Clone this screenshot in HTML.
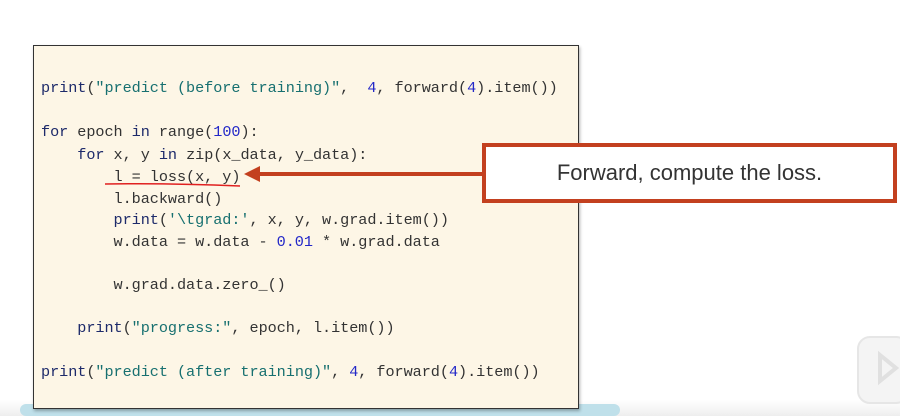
<!DOCTYPE html>
<html><head><style>
body{margin:0;width:900px;height:416px;background:#fff;position:relative;overflow:hidden}
.box{position:absolute;left:33px;top:45px;width:544px;height:362px;background:#fdf6e6;border:1.5px solid #333;box-shadow:1px 2px 3px rgba(0,0,0,.3)}
.l{position:absolute;left:41px;font-family:"Liberation Mono",monospace;font-size:15.2px;line-height:18px;color:#333;white-space:pre;letter-spacing:-0.05px}
.k{color:#1d2a6a}.s{color:#177070}.n{color:#2328c8}
.call{position:absolute;left:482px;top:143px;width:407px;height:52px;border:4px solid #c3401f;background:#fff;font-family:"Liberation Sans",sans-serif;font-size:22px;color:#333;text-align:center;line-height:52px}
</style></head><body>
<div style="position:absolute;left:0;top:400px;width:900px;height:16px;background:linear-gradient(#fff,#eee)"></div>
<div style="position:absolute;left:20px;top:404px;width:600px;height:12px;background:#bfe0ea;border-radius:6px"></div>
<div class="box"></div>
<div class="l" style="top:79px"><span class="k">print</span>(<span class="s">"predict (before training)"</span>,  <span class="n">4</span>, forward(<span class="n">4</span>).item())</div>
<div class="l" style="top:123px"><span class="k">for</span> epoch <span class="k">in</span> range(<span class="n">100</span>):</div>
<div class="l" style="top:146px">    <span class="k">for</span> x, y <span class="k">in</span> zip(x_data, y_data):</div>
<div class="l" style="top:168px">        l = loss(x, y)</div>
<div class="l" style="top:190px">        l.backward()</div>
<div class="l" style="top:211px">        <span class="k">print</span>(<span class="s">'\tgrad:'</span>, x, y, w.grad.item())</div>
<div class="l" style="top:233px">        w.data = w.data - <span class="n">0.01</span> * w.grad.data</div>
<div class="l" style="top:276px">        w.grad.data.zero_()</div>
<div class="l" style="top:319px">    <span class="k">print</span>(<span class="s">"progress:"</span>, epoch, l.item())</div>
<div class="l" style="top:363px"><span class="k">print</span>(<span class="s">"predict (after training)"</span>, <span class="n">4</span>, forward(<span class="n">4</span>).item())</div>
<svg style="position:absolute;left:0;top:0" width="900" height="416">
<path d="M105 184 Q170 183 240 186" stroke="#e02020" stroke-width="1.5" fill="none"/>
<line x1="258" y1="174" x2="484" y2="174" stroke="#c3401f" stroke-width="4"/>
<polygon points="244,174 260,166 260,182" fill="#c3401f"/>
<rect x="858" y="337" width="50" height="66" rx="12" fill="#f4f4f4" stroke="#e6e6e6" stroke-width="2"/>
<path d="M880 355 L896 368 L880 381 Z" fill="none" stroke="#e0e0e0" stroke-width="4"/>
</svg>
<div class="call">Forward, compute the loss.</div>
</body></html>
